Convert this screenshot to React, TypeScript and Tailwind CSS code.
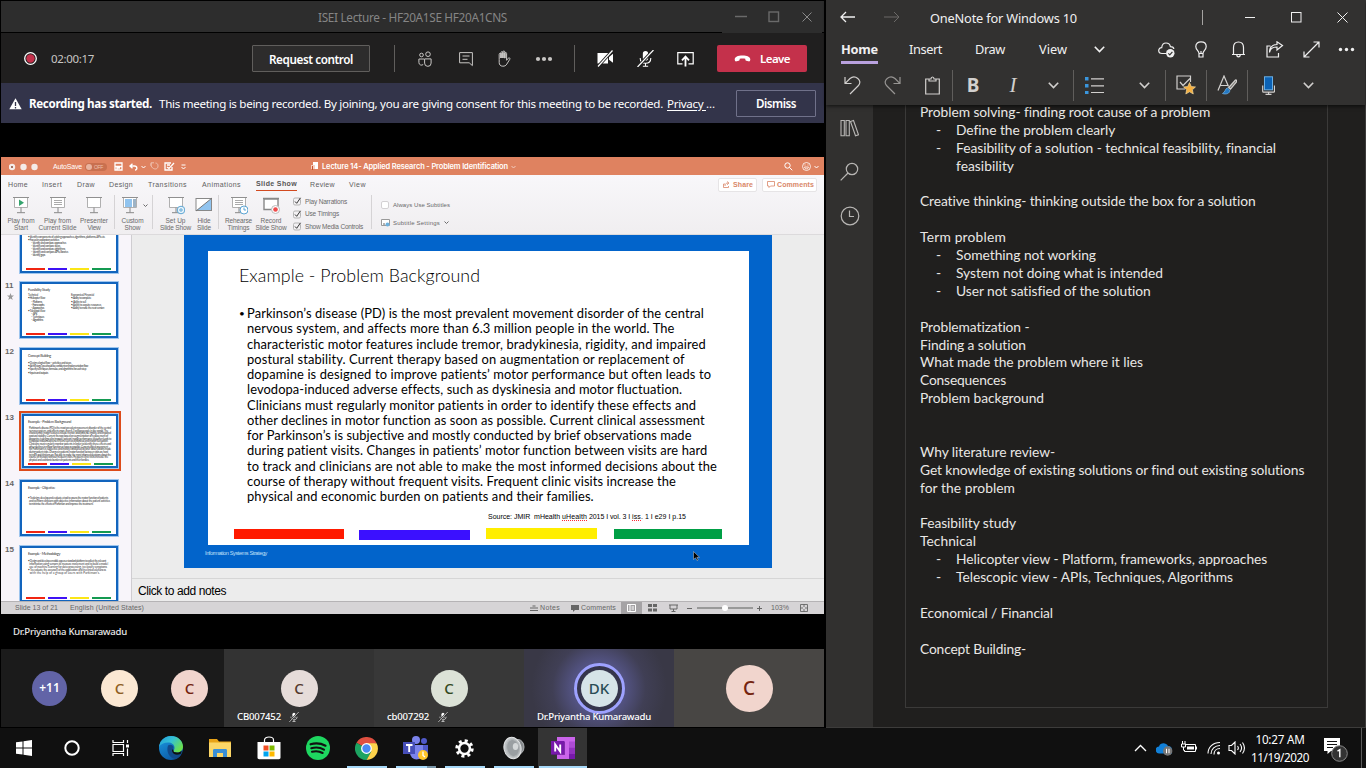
import React, { useLayoutEffect, useRef } from "react";

/* Text whose letter spacing is adjusted so that it fills the width of its box. */
function T({ className = "", ink: inkClass = "", children }: { className?: string; ink?: string; children: string }) {
  const box = useRef<HTMLSpanElement>(null);
  const ink = useRef<HTMLSpanElement>(null);
  useLayoutEffect(() => {
    const b = box.current!;
    const i = ink.current!;
    i.style.letterSpacing = "0px";
    const gap = b.getBoundingClientRect().width - i.getBoundingClientRect().width;
    i.style.letterSpacing = `${gap / children.length}px`;
  }, [children]);
  return (
    <span ref={box} className={`block shrink-0 whitespace-pre ${className}`}>
      <span ref={ink} className={`inline-block ${inkClass}`}>{children}</span>
    </span>
  );
}

type IconProps = { w?: number; h?: number; vb?: string; className?: string; sw?: number; children: React.ReactNode };
function I({ w = 16, h = 16, vb, className = "", sw = 1, children }: IconProps) {
  return (
    <svg width={w} height={h} viewBox={vb ?? `0 0 ${w} ${h}`} className={`block shrink-0 ${className}`} fill="none" stroke="currentColor" strokeWidth={sw}>
      {children}
    </svg>
  );
}

const segoe = "font-['Noto_Sans',sans-serif]";
const calibri = "font-['Lato',sans-serif]";

/* ---------- Meeting window ---------- */

function MeetingTitle() {
  return (
    <div className="flex h-[31px] items-center bg-[#2d2d2d] pt-px pl-[317px] text-[#858585]">
      <T className="w-[189px] text-[11.800px] leading-[16px]">ISEI Lecture - HF20A1SE HF20A1CNS</T>
      <div className="ml-[228px] flex items-center text-[#6a6a6a]">
        <I w={12} h={12}><path d="M0 5.500h12" strokeWidth="1.500" /></I>
        <I w={12} h={12} className="ml-[21px]"><rect x="1" y="1" width="9.500" height="9.500" strokeWidth="1.400" /></I>
        <I w={10} h={10} className="ml-[22px] text-[#8a8a8a]"><path d="M.5.500l9 9M9.500.500l-9 9" /></I>
      </div>
    </div>
  );
}

function MicOff({ s = 16 }: { s?: number }) {
  return (
    <I w={s} h={s} vb="0 0 16 16">
      <rect x="5.500" y="1" width="5" height="9" rx="2.500" fill="currentColor" stroke="none" />
      <path d="M3 7.500c0 3 2 5 5 5s5-2 5-5M8 12.500V15M5.500 15.300h5" />
      <path d="M15.500 0L.5 16" strokeWidth="3" className="stroke-[#222]" />
      <path d="M15.500 0L.5 16" strokeWidth="1.100" />
    </I>
  );
}

function MeetingBar() {
  return (
    <div className="flex h-[50px] items-center bg-[#201f1f] pt-px pl-[23px] text-[#c8c6c4]">
      <I w={13} h={13} className="text-white">
        <circle cx="6.500" cy="6.500" r="5.800" strokeWidth="1.300" />
        <circle cx="6.500" cy="6.500" r="4.200" className="fill-[#c4314b]" stroke="none" />
      </I>
      <T className="ml-[14px] w-[43px] text-[11.500px] leading-[16px]">02:00:17</T>
      <div className="ml-[158px] flex h-[27px] w-[118px] items-center justify-center rounded-[1px] border border-[#605e5c] bg-[#2d2c2c] text-white">
        <T className="w-[84px] text-[11.700px] leading-[16px] font-semibold">Request control</T>
      </div>
      <div className="ml-[24px] h-[27px] w-px bg-[#605e5c]" />
      <I w={14} h={16} className="ml-[23px]">
        <circle cx="3.500" cy="4" r="1.800" /><circle cx="10" cy="3.200" r="2.300" />
        <path d="M6 8H.9v3.500a2.600 2.600 0 0 0 4.300 2M6.600 7.900h6.500v4.200a3.200 3.200 0 0 1-6.500 0z" />
      </I>
      <I w={14} h={16} className="ml-[27px]">
        <path d="M.6 1.600h12.800v13l-3.200-2.800H.6zM3.500 5h7M3.500 8.300h5" />
      </I>
      <I w={15} h={17} vb="0 0 15 17" className="ml-[23px]">
        <path d="M3.200 9.500V4.200c0-1.300 1.800-1.300 1.800 0V8 2.600c0-1.400 1.900-1.400 1.900 0V8 2c0-1.400 1.900-1.400 1.900 0v6.200V3.500c0-1.400 1.800-1.400 1.800 0v6.800l1.600-2c.9-1 2.300-.1 1.600 1l-3 4.800c-.9 1.600-2.200 2.100-4 2.100-2.500 0-3.600-1.700-3.600-3.500z" />
        <path d="M5 3v5M6.900 2.500V8M8.800 3v5" strokeWidth="1.500" />
      </I>
      <I w={18} h={6} className="ml-[24px]">
        <g fill="currentColor" stroke="none"><circle cx="3" cy="3" r="2.100" /><circle cx="9" cy="3" r="2.100" /><circle cx="15" cy="3" r="2.100" /></g>
      </I>
      <div className="ml-[21px] h-[27px] w-px bg-[#605e5c]" />
      <div className="flex items-center text-white">
        <I w={17} h={17} className="ml-[22px]">
          <path d="M.5 3h10.500v10.500H.5zM12 7l4-3.200v9L12 9.700z" fill="currentColor" stroke="none" />
          <path d="M15.500.5L1 16.500" strokeWidth="3" className="stroke-[#201f1f]" />
          <path d="M15.500.5L1 16.500" strokeWidth="1.200" />
        </I>
        <div className="ml-[23px]"><MicOff s={17} /></div>
        <I w={17} h={16} className="ml-[23px]">
          <path d="M5.500 12.800H.8V1.700h15.400v11.100h-4.700" strokeWidth="1.200" />
          <path d="M8.500 15.500V6M5 9.300L8.500 5.500 12 9.300" strokeWidth="1.800" />
        </I>
      </div>
      <div className="ml-[23px] flex h-[27px] w-[90px] items-center rounded-[2px] bg-[#c4314b] pl-[17px] text-white">
        <I w={17} h={7}><path d="M.7 4.600C.5 2 4 .5 8.500.5s8 1.500 7.800 4.100c-.1 1.600-.8 2-2 1.700l-2-.5c-.8-.2-1-.8-1-2-1.500-.5-4-.5-5.600 0 0 1.200-.2 1.800-1 2l-2 .5C1.500 6.600.8 6.200.7 4.600z" fill="currentColor" stroke="none" /></I>
        <T className="ml-[9px] w-[30px] text-[11.500px] leading-[16px] font-semibold">Leave</T>
      </div>
    </div>
  );
}

function ConsentBanner() {
  return (
    <div className="flex h-[40px] items-center bg-[#33344a] pt-px pl-[8px] text-[11.600px] leading-[16px] text-white">
      <I w={13} h={12}><path d="M6.500.3l6.200 11H.3z" fill="currentColor" stroke="none" /><path d="M6.500 4v4M6.500 9v1.500" className="stroke-[#33344a]" strokeWidth="1.300" /></I>
      <T className="ml-[7px] w-[123px] font-bold">Recording has started.</T>
      <T className="ml-[7px] w-[504px]">This meeting is being recorded. By joining, you are giving consent for this meeting to be recorded.</T>
      <T className="ml-[4px] w-[39px]" ink="underline underline-offset-2">Privacy </T>
      <T className="w-[9px]">...</T>
      <div className="ml-[21px] flex h-[27px] w-[80px] items-center justify-center rounded-[1px] border border-[#70718a]">
        <T className="w-[40px] font-semibold">Dismiss</T>
      </div>
    </div>
  );
}

/* ---------- Shared presentation ---------- */

function PptTitle() {
  return (
    <div className="flex h-[18px] items-center bg-[#df8260] pt-px pl-[8px] text-[7px] leading-[10px] text-white">
      <I w={29} h={8}>
        <g fill="#f4ece9" stroke="none"><circle cx="3" cy="4" r="3.200" /><circle cx="14.500" cy="4" r="3.200" /><circle cx="25.500" cy="4" r="3.200" /></g>
        <circle cx="3" cy="4" r="1" fill="#8d4b35" stroke="none" />
      </I>
      <T className="ml-[15px] w-[29px] font-medium">AutoSave</T>
      <div className="ml-[3px] flex h-[8px] w-[22px] items-center rounded-full bg-[#c9704f]">
        <div className="ml-[1px] h-[6px] w-[6px] rounded-full bg-[#e9b5a0]" />
        <T className="ml-[2px] w-[9px] text-[5px] leading-[8px] text-[#edc1b0]">OFF</T>
      </div>
      <I w={9} h={9} className="ml-[7px]" sw={1.300}><path d="M1 1h7v7H1zM1 4.500h7M3 8V6h3" /></I>
      <I w={9} h={8} className="ml-[6px]" sw={1.400}><path d="M3.500 .8L1 3l2.500 2.300M1 3h4.500c3 0 3 4 .5 4" /></I>
      <I w={5} h={4} className="ml-[3px]"><path d="M.5 1l2 2 2-2" /></I>
      <I w={9} h={9} className="ml-[4px] opacity-50"><path d="M4 .8H1v3M1.300 1.300c-2 5 6.700 8.500 6.700 2.500C8 2 7 1.200 5.500 1" /></I>
      <I w={11} h={9} className="ml-[5px]"><path d="M7 1H1v7h7V5M3 5l2 1.500L10 1M3 3h3" strokeWidth="1.300" /></I>
      <I w={5} h={6} className="ml-[6px]"><path d="M.5 1h4M.5 3l2 2 2-2" /></I>
      <I w={8} h={9} className="ml-[125px]"><path d="M2 0h5v7H2z" fill="#fff" stroke="none" /><path d="M0 3h4v4H0z" fill="#f6cfc0" stroke="none" /><path d="M1.500 8V4" stroke="#c9552d" /></I>
      <T className="ml-[3px] w-[186px] font-['Inter',sans-serif] text-[7.500px] font-semibold">Lecture 14- Applied Research - Problem Identification</T>
      <I w={5} h={4} className="ml-[3px] opacity-60"><path d="M.5 1l2 2 2-2" /></I>
      <I w={9} h={9} className="ml-[268px]"><circle cx="3.500" cy="3.500" r="2.700" /><path d="M5.500 5.500L8.300 8.300" /></I>
      <I w={9} h={9} className="ml-[9px]" sw={0.800}><circle cx="4.500" cy="4.500" r="4" /><path d="M2.500 5c.5 2.500 3.500 2.500 4 0zM3 2.500v1M6 2.500v1" /></I>
      <I w={5} h={4} className="ml-[3px]"><path d="M.5 1l2 2 2-2" /></I>
    </div>
  );
}

function PptTabs() {
  return (
    <div className="flex h-[19px] items-center pt-px pl-[7px] text-[7px] leading-[10px] text-[#606060]">
      <T className="w-[20px]">Home</T>
      <T className="ml-[14px] w-[20px]">Insert</T>
      <T className="ml-[15px] w-[18px]">Draw</T>
      <T className="ml-[14px] w-[24px]">Design</T>
      <T className="ml-[15px] w-[39px]">Transitions</T>
      <T className="ml-[15px] w-[39px]">Animations</T>
      <div className="ml-[15px] flex h-[13px] w-[41px] flex-col border-b border-[#d24a20] pt-px">
        <T className="w-[41px] font-bold text-[#555]">Slide Show</T>
      </div>
      <T className="ml-[13px] w-[25px]">Review</T>
      <T className="ml-[14px] w-[17px]">View</T>
      <div className="ml-[352px] flex h-[14px] w-[39px] items-center rounded-[2px] border border-[#e6e4e6] bg-white pl-[4px] text-[#d98768]">
        <I w={7} h={7} sw={0.800}><path d="M2 3H.5v3.500h5V5M2 5c0-2 1-3 3-3M4 .5L6 2 4 3.800" /></I>
        <T className="ml-[3px] w-[20px] font-semibold">Share</T>
      </div>
      <div className="ml-[5px] flex h-[14px] w-[55px] items-center rounded-[2px] border border-[#e6e4e6] bg-white pl-[4px] text-[#d98768]">
        <I w={8} h={7} sw={0.800}><path d="M.5.500h7v4.500h-4L2 6.500V5H.5z" /></I>
        <T className="ml-[2px] w-[37px] font-semibold">Comments</T>
      </div>
    </div>
  );
}

function Easel({ children }: { children?: React.ReactNode }) {
  return (
    <I w={18} h={20}>
      <path d="M1 2.500h16" stroke="#909090" />
      <path d="M2.500 3v9.500h13V3" fill="#fff" stroke="#b0b0b0" />
      <path d="M9 12.500V17.500M5 17.700h8" stroke="#888" />
      {children}
    </I>
  );
}

function RibbonButton({ cell, icon, a, wa, b, wb }: { cell: string; icon: React.ReactNode; a: string; wa: string; b: string; wb: string }) {
  return (
    <div className={`flex shrink-0 flex-col items-center ${cell}`}>
      <div className="h-[22px] shrink-0">{icon}</div>
      <T className={`leading-[7px] ${wa}`}>{a}</T>
      <T className={`leading-[7px] ${wb}`}>{b}</T>
    </div>
  );
}

function RibbonCheck({ label, w }: { label: string; w: string }) {
  return (
    <div className="flex h-[12.500px] items-center">
      <I w={9} h={9}><rect x=".5" y="1" width="7" height="7" rx="1.500" fill="#f3f1f3" stroke="#b5b5b5" /><path d="M2 4.500L3.700 6.300 7.500.8" stroke="#333" /></I>
      <T className={`ml-[3px] leading-[8px] ${w}`}>{label}</T>
    </div>
  );
}

function Ribbon() {
  const sep = <div className="h-[34px] w-px shrink-0 bg-[#d5d3d5]" />;
  return (
    <div className="flex h-[41px] items-start pt-[1px] text-[6.500px] text-[#6a6a6a]">
      <RibbonButton cell="w-[40px]" a="Play from" wa="w-[27px]" b="Start" wb="w-[14px]" icon={<Easel><path d="M7 4.500l5 3.300-5 3.300z" fill="#35a46e" stroke="none" /></Easel>} />
      <RibbonButton cell="w-[33px]" a="Play from" wa="w-[27px]" b="Current Slide" wb="w-[38px]" icon={<Easel><path d="M5 5.500h8M5 7.500h8M5 9.500h8" stroke="#aaa" /></Easel>} />
      <RibbonButton cell="w-[40px]" a="Presenter" wa="w-[28px]" b="View" wb="w-[13px]" icon={<Easel />} />
      {sep}
      <div className="flex w-[37px] shrink-0">
        <RibbonButton cell="w-[35px]" a="Custom" wa="w-[22px]" b="Show" wb="w-[16px]" icon={<div className="-ml-[6px]"><Easel><path d="M4 4h7v8H4z" fill="#90c3ee" stroke="none" /><path d="M12 4h3v8h-3z" fill="#9db3c6" stroke="none" /></Easel></div>} />
        <I w={5} h={4} className="mt-[9px] -ml-[7px]"><path d="M.5.500l2 2 2-2" /></I>
      </div>
      {sep}
      <RibbonButton cell="ml-[2px] w-[41px]" a="Set Up" wa="w-[20px]" b="Slide Show" wb="w-[31px]" icon={<Easel><circle cx="14" cy="15" r="3.800" fill="#e9f4fb" stroke="#5ca5d3" /><circle cx="14" cy="15" r="1.200" stroke="#5ca5d3" /></Easel>} />
      <RibbonButton cell="w-[16px]" a="Hide" wa="w-[13px]" b="Slide" wb="w-[14px]" icon={<I w={18} h={20}><rect x="1" y="3.500" width="15.500" height="12" fill="#fff" stroke="#888" /><path d="M16 4v11H2z" fill="#91c4ef" stroke="none" /><path d="M1 16L17 3" stroke="#777" /></I>} />
      <div className="ml-[6px]">{sep}</div>
      <RibbonButton cell="w-[39px]" a="Rehearse" wa="w-[27px]" b="Timings" wb="w-[22px]" icon={<Easel><path d="M5 5.500h8M5 7.500h8M5 9.500h8" stroke="#aaa" /><circle cx="14" cy="15" r="4" fill="#fff" stroke="#5ca5d3" /><path d="M14 12.500V15h2" stroke="#5ca5d3" /></Easel>} />
      <RibbonButton cell="w-[26px]" a="Record" wa="w-[21px]" b="Slide Show" wb="w-[31px]" icon={<I w={18} h={20}><path d="M1 3.500h16M2 4v10.500h14V4z" fill="#fff" stroke="#888" strokeWidth="1.400" /><circle cx="13.500" cy="14.500" r="4" fill="#fff" stroke="#bbb" /><circle cx="13.500" cy="14.500" r="2.300" fill="#ef4c4c" stroke="none" /></I>} />
      <div className="mt-[1px] ml-[9px] flex w-[78px] shrink-0 flex-col">
        <RibbonCheck label="Play Narrations" w="w-[42px]" />
        <RibbonCheck label="Use Timings" w="w-[34px]" />
        <RibbonCheck label="Show Media Controls" w="w-[58px]" />
      </div>
      {sep}
      <div className="ml-[9px] flex flex-col pt-[4px] text-[6px]">
        <div className="flex h-[12px] items-center">
          <I w={8} h={8}><rect x=".5" y=".5" width="7" height="7" rx="1.500" fill="#fff" stroke="#d3d1d3" /></I>
          <T className="ml-[4px] w-[57px] leading-[8px]">Always Use Subtitles</T>
        </div>
        <div className="mt-[6px] flex h-[12px] items-center">
          <I w={9} h={8}><path d="M.5.500h8v6h-8z" fill="#fff" stroke="#999" /><path d="M2 5h2" stroke="#666" /><circle cx="6.500" cy="5.500" r="2" fill="#6db1dd" stroke="none" /></I>
          <T className="ml-[3px] w-[47px] leading-[8px]">Subtitle Settings</T>
          <I w={5} h={4} className="ml-[4px]"><path d="M.5.500l2 2 2-2" /></I>
        </div>
      </div>
    </div>
  );
}

const slideBody: [string, string][] = [
  ["Parkinson’s disease (PD) is the most prevalent movement disorder of the central", "w-[457px]"],
  ["nervous system, and affects more than 6.3 million people in the world. The", "w-[427px]"],
  ["characteristic motor features include tremor, bradykinesia, rigidity, and impaired", "w-[459px]"],
  ["postural stability. Current therapy based on augmentation or replacement of", "w-[438px]"],
  ["dopamine is designed to improve patients’ motor performance but often leads to", "w-[464px]"],
  ["levodopa-induced adverse effects, such as dyskinesia and motor fluctuation.", "w-[435px]"],
  ["Clinicians must regularly monitor patients in order to identify these effects and", "w-[449px]"],
  ["other declines in motor function as soon as possible. Current clinical assessment", "w-[458px]"],
  ["for Parkinson’s is subjective and mostly conducted by brief observations made", "w-[445px]"],
  ["during patient visits. Changes in patients’ motor function between visits are hard", "w-[461px]"],
  ["to track and clinicians are not able to make the most informed decisions about the", "w-[470px]"],
  ["course of therapy without frequent visits. Frequent clinic visits increase the", "w-[429px]"],
  ["physical and economic burden on patients and their families.", "w-[347px]"],
];

function MiniBars() {
  return (
    <div className="mt-auto mb-[1px] flex h-[2px] shrink-0 gap-[3px] pl-[4px]">
      <div className="w-[19px] bg-[#f02511]" /><div className="w-[19px] bg-[#3e12f5]" /><div className="w-[19px] bg-[#fbe616]" /><div className="w-[19px] bg-[#149a51]" />
    </div>
  );
}

function Thumb({ n, star, active, title, tw, children }: { n: string; star?: boolean; active?: boolean; title: string; tw: string; children: React.ReactNode }) {
  return (
    <div className="flex h-[65.900px] shrink-0">
      <div className="w-[18px] pl-[4px] text-[#666]">
        <div className="text-[8px] leading-[7px] font-bold">{n}</div>
        {star && <I w={7} h={7} vb="0 0 10 10" className="mt-[4px] ml-[2px]"><path d="M5 0l1.300 3.600L10 3.700 7 6l1.200 4L5 7.700 1.800 10 3 6 0 3.700l3.700-.1z" fill="#999" stroke="none" /></I>}
      </div>
      <div className={active ? "-mt-[3px] h-[60px] w-[102px] border-2 border-[#dd4a1a] bg-white p-[1px]" : "h-[58px] w-[101px] pl-[1px]"}>
        <div className={`flex flex-col overflow-hidden border-[2px] border-[#1264bd] bg-white text-[2.900px] text-[#333] outline outline-[#9ec5ee] ${calibri} ${active ? "h-[54px] w-[96px]" : "h-[56px] w-[98px]"}`}>
          <div className={`flex flex-col pt-[4px] ${active ? "pl-[4px]" : "pl-[6px]"}`}>
            <T className={`text-[3.700px] leading-[4px] ${tw}`}>{title}</T>
            {children}
          </div>
          <MiniBars />
        </div>
      </div>
    </div>
  );
}

function MiniLines({ lines }: { lines: [string, string, string?][] }) {
  return (
    <div className="flex flex-col">
      {lines.map(([l, w, indent]) => <T key={l} className={`h-[3.100px] leading-[3.100px] ${w} ${indent ?? ""}`}>{l}</T>)}
    </div>
  );
}

function ThumbPane() {
  return (
    <div className="h-full w-[130px] overflow-hidden bg-[#f8f5fa]">
      <div className="-mt-[18.500px] flex flex-col">
        <Thumb n="10" title="Problem Solving" tw="w-[30px]">
          <div className="mt-[9px]"><MiniLines lines={[["• Identify components of existing approaches, algorithms, platforms, APIs etc.", "w-[77px]"], ["• Focus on exploratory activities", "w-[31px]"], ["– Identify and compare approaches", "w-[35px]", "ml-[3px]"], ["– Identify and compare steps", "w-[29px]", "ml-[3px]"], ["– Identify and compare algorithms", "w-[34px]", "ml-[3px]"], ["– Identify and compare APIs, libraries", "w-[37px]", "ml-[3px]"], ["– Identify gaps", "w-[14px]", "ml-[3px]"]]} /></div>
        </Thumb>
        <Thumb n="11" star title="Feasibility Study" tw="w-[22px]">
          <div className="mt-[2px] flex gap-[26px]">
            <MiniLines lines={[["Technical", "w-[10px]"], ["• Helicopter View", "w-[17px]"], ["– Platforms", "w-[11px]", "ml-[3px]"], ["– Frameworks", "w-[13px]", "ml-[3px]"], ["– Approaches", "w-[13px]", "ml-[3px]"], ["• Telescopic View", "w-[17px]"], ["– APIs", "w-[6px]", "ml-[3px]"], ["– Techniques", "w-[13px]", "ml-[3px]"], ["– Algorithms", "w-[12px]", "ml-[3px]"]]} />
            <MiniLines lines={[["Economical/Financial", "w-[23px]"], ["• Ability to complete", "w-[20px]"], ["• Ability to sell", "w-[15px]"], ["• Ability to acquire resources", "w-[30px]"], ["• Ability to make the next version", "w-[33px]"]]} />
          </div>
        </Thumb>
        <Thumb n="12" title="Concept Building" tw="w-[23px]">
          <div className="mt-[4px]"><MiniLines lines={[["• Design a logical flow – activities and steps", "w-[43px]"], ["• At this stage, you should be confident on implementation flow", "w-[60px]"], ["• Specify techniques, formulae, and algorithms for each step", "w-[58px]"], ["• Inputs and outputs", "w-[20px]"]]} /></div>
        </Thumb>
        <Thumb n="13" active title="Example - Problem Background" tw="w-[43px]">
          <div className="mt-[3px] flex flex-col pl-[1px]">
            {slideBody.map(([l], k) => <T key={l} className={`h-[2.650px] leading-[2.650px] ${k === 12 ? "w-[60px]" : k % 2 ? "w-[79px]" : "w-[82px]"}`}>{l}</T>)}
          </div>
        </Thumb>
        <Thumb n="14" title="Example - Objective" tw="w-[27px]">
          <div className="mt-[7px]"><MiniLines lines={[["• To design, develop and evaluate a tool to assess the motor function of patients", "w-[80px]"], ["  and to inform clinicians with objective information about the patient activities", "w-[82px]"], ["  to minimise the effects of Parkinson and improve the treatment.", "w-[65px]"]]} /></div>
        </Thumb>
        <Thumb n="15" title="Example - Methodology" tw="w-[32px]">
          <div className="mt-[4px]"><MiniLines lines={[["• Design and develop a mobile app as a standard platform to collect the relevant", "w-[78px]"], ["  information using sensors to measure movement and to build a model", "w-[80px]"], ["  use of machine learning for data processing, to classify symptoms", "w-[79px]"], ["• To evaluate the accuracy of the application and its clinical usefulness", "w-[78px]"], ["  with the help of a group of users with Parkinson’s.", "w-[72px]"]]} /></div>
        </Thumb>
      </div>
    </div>
  );
}

function Slide() {
  return (
    <div className="relative ml-[52px] flex h-[333px] w-[588px] flex-col bg-[#0264cb] pt-[16px] pl-[24px]">
      <div className="flex h-[294px] w-[541px] flex-col bg-white text-black">
        <T className={`mt-[13px] ml-[31px] w-[241px] text-[17.800px] leading-[22px] font-light ${calibri}`}>Example - Problem Background</T>
        <div className={`mt-[20px] flex pl-[31px] text-[12.900px] leading-[15.250px] ${calibri}`}>
          <div className="w-[8px] text-[10px]">•</div>
          <div className="flex flex-col">
            {slideBody.map(([l, w]) => <T key={l} className={`h-[15.250px] ${w}`}>{l}</T>)}
          </div>
        </div>
        <div className="mt-[8px] ml-[280px] flex text-[7px] leading-[10px]">
          <T className="w-[74px]">Source: JMIR  mHealth </T>
          <T className="w-[25px]" ink="underline decoration-red-500 decoration-dotted">uHealth</T>
          <T className="w-[45px]"> 2015 I vol. 3 I </T>
          <T className="w-[9px]" ink="underline decoration-red-500 decoration-dotted">iss</T>
          <T className="w-[45px]">. 1 I e29 I p.15</T>
        </div>
        <div className="mt-[6px] flex h-[13px] pl-[26px]">
          <div className="mt-[1px] h-[10px] w-[110px] bg-[#ff1a00]" />
          <div className="mt-[2px] ml-[15px] h-[10px] w-[111px] bg-[#3b10ff]" />
          <div className="ml-[16px] h-[11px] w-[111px] bg-[#ffee00]" />
          <div className="mt-[1px] ml-[17px] h-[10px] w-[108px] bg-[#009f45]" />
        </div>
      </div>
      <T className="mt-[3px] -ml-[3px] w-[62px] text-[5.600px] leading-[10px] text-[#c5e0f8]">Information Systems Strategy</T>
      <I w={7} h={10} className="absolute top-[316px] left-[509px]"><path d="M.500.500v8l2-1.700 1.500 2.800 1.200-.6-1.400-2.700H6.500z" fill="#000" stroke="#ccc" strokeWidth=".5" /></I>
    </div>
  );
}

function PptStatus() {
  return (
    <div className="flex h-[13px] items-center border-t border-[#b5b3b5] bg-[#d6d4d6] pl-[14px] text-[7px] leading-[10px] text-[#666]">
      <T className="w-[43px]">Slide 13 of 21</T>
      <T className="ml-[12px] w-[74px]">English (United States)</T>
      <I w={8} h={8} className="ml-[386px]"><path d="M0 4h8M0 6.500h8M2.500 2h3" strokeWidth="1.100" /></I>
      <T className="ml-[2px] w-[20px]">Notes</T>
      <I w={8} h={8} className="ml-[11px]"><path d="M0 1h8v5H4L2 8V6H0z" fill="currentColor" stroke="none" /></I>
      <T className="ml-[2px] w-[35px]">Comments</T>
      <div className="ml-[5px] flex h-[12px] w-[21px] items-center justify-center bg-[#a5a3a5] text-white"><I w={9} h={8}><path d="M.5.500h8v7h-8zM3 .5v7M4.500 3h2.500M4.500 5h2.500" /></I></div>
      <I w={9} h={8} className="ml-[6px]"><path d="M0 0h4v3H0zM5 0h4v3H5zM0 4.500h4v3H0zM5 4.500h4v3H5z" fill="currentColor" stroke="none" /></I>
      <I w={9} h={8} className="ml-[12px]"><path d="M0 1h9M1 1v4h7V1M4.500 5v2M2.500 7.500h4" /></I>
      <I w={5} h={5} className="ml-[9px]"><path d="M0 2.500h5" /></I>
      <div className="ml-[5px] flex h-[6px] w-[56px] items-center bg-[linear-gradient(#999,#999)] bg-[length:100%_2px] bg-center bg-no-repeat pl-[25px]"><div className="h-[6px] w-[6px] rounded-full bg-white" /></div>
      <I w={5} h={5} className="ml-[4px]"><path d="M0 2.500h5M2.500 0v5" /></I>
      <T className="ml-[9px] w-[18px]">103%</T>
      <I w={8} h={8} className="ml-[11px]" sw={0.900}><path d="M.5.500h7v7h-7zM4 0v3M4 5v3M0 4h3M5 4h3" /></I>
    </div>
  );
}

function Presentation() {
  return (
    <div className="mt-[34px] flex h-[457px] flex-col bg-[#ececec] font-['Liberation_Sans',sans-serif]">
      <PptTitle />
      <div className="flex h-[60px] flex-col border-b border-[#dcdadc] bg-linear-to-b from-[#f8f7fa] to-[#f0eef0]">
        <PptTabs />
        <Ribbon />
      </div>
      <div className="flex h-[366px]">
        <ThumbPane />
        <div className="flex w-[693px] flex-col border-l border-[#cfcdd1]">
          <Slide />
          <div className="mt-[10px] flex h-[23px] items-center border-t border-[#d6d6d6] pt-[2px] pl-[6px] text-black">
            <T className="w-[88px] text-[12px] leading-[16px]">Click to add notes</T>
          </div>
        </div>
      </div>
      <PptStatus />
    </div>
  );
}

function Avatar({ children, className }: { children: string; className: string }) {
  return <div className={`flex shrink-0 items-center justify-center rounded-full ${className}`}>{children}</div>;
}

function Participants() {
  return (
    <div className="flex h-[78px] text-[15px] font-medium">
      <div className="flex w-[223px] items-center bg-[#1b1b1b] pl-[31px]">
        <Avatar className="h-[35px] w-[35px] bg-[#6264a7] text-[12px] font-semibold text-white">+11</Avatar>
        <Avatar className="ml-[34px] h-[37px] w-[37px] bg-[#fbe8d3] text-[#8f5f24]">C</Avatar>
        <Avatar className="ml-[33px] h-[37px] w-[37px] bg-[#f1d5cd] text-[#74240f]">C</Avatar>
      </div>
      <div className="relative flex w-[150px] items-center justify-center bg-[#333]">
        <Avatar className="h-[37px] w-[37px] bg-[#e6dcd9] text-[#54392e]">C</Avatar>
        <div className="absolute bottom-[2px] left-[13px] flex items-center text-[9.600px] leading-[16px] text-white">
          <T className="w-[44px]">CB007452</T><div className="ml-[8px]"><MicOff s={10} /></div>
        </div>
      </div>
      <div className="relative flex w-[150px] items-center justify-center bg-[#383838]">
        <Avatar className="h-[37px] w-[37px] bg-[#dce2d7] text-[#33491f]">C</Avatar>
        <div className="absolute bottom-[2px] left-[13px] flex items-center text-[9.600px] leading-[16px] text-white">
          <T className="w-[42px]">cb007292</T><div className="ml-[9px]"><MicOff s={10} /></div>
        </div>
      </div>
      <div className="relative flex w-[150px] items-center justify-center bg-[radial-gradient(circle,#5c5c92_0%,#525280_32%,#403f55_55%,#393846_80%)]">
        <div className="flex h-[51px] w-[51px] items-center justify-center rounded-full border-[3px] border-[#9ea2ff] bg-[#35354c]">
          <Avatar className="h-[37px] w-[37px] bg-[#d6e4e8] text-[#294c55]">DK</Avatar>
        </div>
        <div className="absolute bottom-[2px] left-[13px] text-[9.600px] leading-[16px] text-white"><T className="w-[114px]">Dr.Priyantha Kumarawadu</T></div>
      </div>
      <div className="flex w-[150px] items-center justify-center bg-[#484644]">
        <Avatar className="h-[47px] w-[47px] bg-[#f1d5cd] text-[19px] text-[#74240f]">C</Avatar>
      </div>
    </div>
  );
}

function Meeting() {
  return (
    <div className={`flex h-[728px] w-[825px] shrink-0 flex-col bg-black pt-px pr-px pl-px ${segoe}`}>
      <MeetingTitle />
      <div className="flex h-px shrink-0 bg-black"><div className="ml-[721px] w-[100px] bg-[#2d2d2d]" /></div>
      <MeetingBar />
      <ConsentBanner />
      <Presentation />
      <div className="flex h-[35px] items-center pt-px pl-[12px] text-[9.600px] leading-[16px] font-medium text-[#e8e8e8]"><T className="w-[114px]">Dr.Priyantha Kumarawadu</T></div>
      <Participants />
    </div>
  );
}

/* ---------- Notes window ---------- */

function Cell({ className = "w-[40px]", children }: { className?: string; children: React.ReactNode }) {
  return <div className={`flex shrink-0 items-center justify-center ${className}`}>{children}</div>;
}

function Chevron() {
  return <I w={11} h={7} sw={1.600}><path d="M.8.800l4.700 4.700L10.200.800" /></I>;
}

function NotesChrome() {
  const sep = <div className="h-[31px] w-px shrink-0 bg-[#605e5c]" />;
  return (
    <div className="z-10 flex h-[105px] shrink-0 flex-col bg-[#323130] text-[#f0f0f0] shadow-[0_1px_4px_rgba(0,0,0,0.7)]">
      <div className="flex h-[34px] items-center pl-[14px]">
        <I w={15} h={12} sw={1.300}><path d="M15 6H1M6 1L1 6l5 5" /></I>
        <I w={16} h={12} className="ml-[29px] text-[#6b6967]"><path d="M0 6h15M10 1l5 5-5 5" /></I>
        <T className="ml-[30px] w-[147px] pt-[2px] text-[12.800px] leading-[18px]">OneNote for Windows 10</T>
        <div className="ml-[125px] h-[15px] w-px bg-[#a5a3a1]" />
        <I w={11} h={10} className="ml-[42px]"><path d="M0 5.500h10" /></I>
        <I w={11} h={11} className="ml-[35px]"><rect x=".5" y=".5" width="9.500" height="9.500" /></I>
        <I w={11} h={11} className="ml-[35px]"><path d="M.5.500l10 10M10.500.500l-10 10" /></I>
      </div>
      <div className="flex h-[31px] items-start pt-[6px] pl-[15px] text-[12.800px] leading-[18px]">
        <div className="flex h-[24px] flex-col justify-between border-b-[3px] border-[#b9a1de]"><T className="w-[37px] font-bold">Home</T></div>
        <T className="ml-[31px] w-[33px]">Insert</T>
        <T className="ml-[33px] w-[30px]">Draw</T>
        <T className="ml-[34px] w-[28px]">View</T>
        <div className="flex h-[18px] items-center pl-[27px]">
          <Chevron />
          <I w={17} h={17} className="ml-[53px]" sw={1.200}><path d="M8 12.500H4C1.800 12.500.700 11 .700 9.500S2 6.500 3.700 6.700C4 3.500 6 2 8 2c2.500 0 4 1.500 4.400 3.700 2 0 3.400 1 3.400 2.300" /><circle cx="12.300" cy="12.300" r="4.200" fill="currentColor" stroke="none" /><path d="M10.300 12.300l1.500 1.500 2.600-3" stroke="#323130" /></I>
          <I w={13} h={17} className="ml-[20px]" sw={1.200}><path d="M4 12.500c0-3-3.200-3.500-3.200-7C.800 2.500 3.200.800 6 .800s5.200 1.700 5.200 4.700c0 3.500-3.200 4-3.200 7zM4 12.500v3.500h4v-3.500M6 10v2.500" /></I>
          <I w={15} h={17} className="ml-[23px]" sw={1.200}><path d="M1 13.500h13M2.500 13.500V6.500C2.500 3 4.500 1 7.500 1s5 2 5 5.500v7M5.800 13.800c0 2.700 3.400 2.700 3.400 0" /></I>
          <I w={18} h={17} className="ml-[20px]" sw={1.200}><path d="M4.500 5H1v11h11.500v-4M3.500 11.500C4 8 6 6 11 6V9l5.500-4.500L11 .800V3.500C6 3.800 3.500 7 3.500 11.500z" /></I>
          <I w={17} h={17} className="ml-[19px]" sw={1.200}><path d="M1.500 15.500l14-14M10.500 1h5.500v5.500M1 10.500V16h5.500" /></I>
          <I w={17} h={5} className="ml-[18px]"><g fill="currentColor" stroke="none"><circle cx="2.500" cy="2.500" r="1.700" /><circle cx="8.500" cy="2.500" r="1.700" /><circle cx="14.500" cy="2.500" r="1.700" /></g></I>
        </div>
      </div>
      <div className="flex h-[40px] items-center pl-[6px] text-[#d2d0ce]">
        <Cell><I w={17} h={19} sw={1.200}><path d="M1 1v6.500h6.500M1.200 7.300L6 2.500c5-4.500 13 2 8.500 7L6 18" /></I></Cell>
        <Cell><I w={17} h={19} sw={1.200} className="text-[#979593]"><path d="M16 1v6.500H9.500M15.800 7.300L11 2.500c-5-4.500-13 2-8.500 7L11 18" /></I></Cell>
        <Cell><I w={15} h={19} sw={1.200}><path d="M4 3H.700v15h13.600V3H11M4 5V3h2c0-2.700 3-2.700 3 0h2v2z" /></I></Cell>
        {sep}
        <Cell><span className="text-[19px] leading-[24px] font-bold">B</span></Cell>
        <Cell><span className="font-['Liberation_Serif',serif] text-[21px] leading-[24px] italic">I</span></Cell>
        <Cell><Chevron /></Cell>
        {sep}
        <Cell><I w={19} h={17}><path d="M0 0h3.500v3.500H0zM0 7h3.500v3.500H0zM0 14h3.500v3H0z" fill="#3a96dd" stroke="none" /><path d="M6 1.800h13M6 8.800h13M6 15.500h13" strokeWidth="1.200" /></I></Cell>
        <Cell className="ml-[10px] w-[41px]"><Chevron /></Cell>
        {sep}
        <Cell><I w={20} h={20} sw={1.200}><path d="M9 14H1V1h13.500v6M4 7l3 3.500 7-7" /><path d="M13.500 7.500l1.800 4 4.200.4-3.100 2.900.9 4.200-3.800-2.200-3.700 2.200.8-4.200-3.100-2.900 4.200-.4z" fill="#f5b041" stroke="#f7dfa8" strokeWidth=".6" /></I></Cell>
        {sep}
        <Cell><I w={20} h={20} sw={1.200}><path d="M1 15.500L7 1l4.500 10.500M3 10.500h8" /><path d="M18.500 5l-6.800 7.500 1.800 1.700L19.500 7c.5-1.500-.2-2.300-1-2z" fill="#77756f" /><path d="M10.500 13c-2.500.5-2 4-5 5.500 3.500 1.200 7.500 0 7.300-3.300z" fill="#2479c4" stroke="#76b9ed" strokeWidth=".7" /></I></Cell>
        {sep}
        <Cell><I w={13} h={19}><rect x="2.500" y=".8" width="8" height="13" fill="#0b62b5" stroke="#69afe5" /><path d="M.700 9.500v5.800c0 .6.300.9.900.9h10c.6 0 .9-.3.900-.9V9.500M6.600 16.500v2M3.500 18.300h6" strokeWidth="1.200" /></I></Cell>
        <Cell><Chevron /></Cell>
      </div>
    </div>
  );
}

function Note({ dash, w, children }: { dash?: boolean; w?: string; children?: string }) {
  return (
    <div className="flex h-[17.900px] shrink-0 leading-[17.900px]">
      {dash && <span className="w-[36px] pl-[16px]">-</span>}
      {children && <T className={w}>{children}</T>}
    </div>
  );
}

function NotesBody() {
  return (
    <div className="flex h-[622px] overflow-hidden bg-[#201f1e]">
      <div className="flex w-[47px] flex-col items-center bg-[#31302f] pt-[14px] text-[#b8b6b4]">
        <I w={19} h={18} sw={1.100}><path d="M1 1.500h3.300v15.300H1zM6 1.500h3.300v15.300H6zM10.500 2.500l3-1 5 14.300-3 1z" /></I>
        <I w={19} h={19} className="mt-[25px]" sw={1.200}><circle cx="12" cy="7" r="5.700" /><path d="M8 11l-7.300 7.300" /></I>
        <I w={20} h={20} className="mt-[25px]" sw={1.200}><circle cx="10" cy="10" r="8.800" /><path d="M9.500 4.500V10.500H14" /></I>
      </div>
      <div className={`ml-[32px] flex h-[603px] w-[423px] flex-col border-r border-b border-l border-[#3b3a39] pl-[14px] text-[13.800px] text-[#e9e7e5] ${calibri}`}>
        <div className="-mt-[2px] flex flex-col">
          <Note w="w-[290px]">Problem solving- finding root cause of a problem</Note>
          <Note dash w="w-[159px]">Define the problem clearly</Note>
          <Note dash w="w-[320px]">Feasibility of a solution - technical feasibility, financial</Note>
          <div className="pl-[36px]"><Note w="w-[58px]">feasibility</Note></div>
          <Note />
          <Note w="w-[336px]">Creative thinking- thinking outside the box for a solution</Note>
          <Note />
          <Note w="w-[86px]">Term problem</Note>
          <Note dash w="w-[140px]">Something not working</Note>
          <Note dash w="w-[207px]">System not doing what is intended</Note>
          <Note dash w="w-[195px]">User not satisfied of the solution</Note>
          <Note />
          <Note w="w-[110px]">Problematization -</Note>
          <Note w="w-[106px]">Finding a solution</Note>
          <Note w="w-[223px]">What made the problem where it lies</Note>
          <Note w="w-[86px]">Consequences</Note>
          <Note w="w-[124px]">Problem background</Note>
          <Note />
          <Note />
          <Note w="w-[135px]">Why literature review-</Note>
          <Note w="w-[385px]">Get knowledge of existing solutions or find out existing solutions</Note>
          <Note w="w-[95px]">for the problem</Note>
          <Note />
          <Note w="w-[96px]">Feasibility study</Note>
          <Note w="w-[56px]">Technical</Note>
          <Note dash w="w-[311px]">Helicopter view - Platform, frameworks, approaches</Note>
          <Note dash w="w-[277px]">Telescopic view - APIs, Techniques, Algorithms</Note>
          <Note />
          <Note w="w-[133px]">Economical / Financial</Note>
          <Note />
          <Note w="w-[106px]">Concept Building-</Note>
        </div>
      </div>
    </div>
  );
}

function Notes() {
  return (
    <div className={`ml-px flex w-[540px] flex-col border-r border-b border-[#3d3c3b] ${segoe}`}>
      <NotesChrome />
      <NotesBody />
    </div>
  );
}

/* ---------- Taskbar ---------- */

function TaskButton({ bar = "bg-transparent", active, children }: { bar?: string; active?: boolean; children: React.ReactNode }) {
  return (
    <div className={`flex h-[40px] w-[49px] shrink-0 flex-col items-center ${active ? "bg-[#343434]" : ""}`}>
      <div className="flex h-[38px] items-center pt-[2px]">{children}</div>
      <div className={`h-[2px] ${active ? "w-[48px]" : "w-[40px]"} ${bar}`} />
    </div>
  );
}

function Taskbar() {
  return (
    <div className={`flex h-[40px] items-center bg-[#101010] text-white ${segoe}`}>
      <Cell className="w-[48px]"><I w={16} h={16}><path d="M0 2.300l6.500-.9v6.100H0zM7.500 1.200L16 0v7.500H7.500zM0 8.500h6.500v6.100L0 13.700zM7.500 8.500H16V16l-8.500-1.200z" fill="#fff" stroke="none" /></I></Cell>
      <Cell className="w-[48px]"><I w={16} h={16}><circle cx="8" cy="8" r="6.700" strokeWidth="2" /></I></Cell>
      <Cell className="w-[48px]"><I w={17} h={16} sw={1.200}><path d="M1 0v2.500h10.500V0M1 4.500h10.500v7H1zM1 16v-2.500h10.500V16M15.500 0v3M15.500 8.500V16" /><path d="M14 4.500h3v3h-3z" fill="#fff" stroke="none" /></I></Cell>
      <div className="w-[2px]" />
      <TaskButton>
        <I w={24} h={24}>
          <defs>
            <linearGradient id="e1" x1="0" y1="0" x2="1" y2=".6"><stop offset="0" stopColor="#209bd8" /><stop offset=".5" stopColor="#35c1d6" /><stop offset="1" stopColor="#6be04b" /></linearGradient>
            <linearGradient id="e2" x1="0" y1="0" x2=".6" y2="1"><stop offset="0" stopColor="#1b9be4" /><stop offset="1" stopColor="#0c59a4" /></linearGradient>
          </defs>
          <circle cx="12" cy="12" r="12" fill="url(#e2)" stroke="none" />
          <path d="M0 11C1 4 6 0 12 0c7 0 12 5 12 10.500 0 4-3 6-6 6-2.500 0-4-1-3.500-2 1-1.200 1-2 1-3C15.500 8.500 12.500 6.500 9 6.500 5 6.500 1.500 8 0 11z" fill="url(#e1)" stroke="none" />
          <path d="M9 9.500c-2 6 1 13 8 13.500 3-1.300 4.500-3 5.500-5.500-4.500 2.500-9 1-9.500-2.500-.2-1.500 1.500-1.500 1.500-3.500C14.500 9 11 8 9 9.500z" fill="#114a8b" stroke="none" />
          <path d="M14.500 14.500c-.5 1 1 2 3.500 2 2 0 3.500-.6 4.700-2l-.5 3c-4 2.500-8.700 1-9.200-2.500-.1-1 .5-1.500 1-2z" fill="#101010" stroke="none" />
        </I>
      </TaskButton>
      <TaskButton><I w={22} h={18}><path d="M0 0h8l2 2.500H22V18H0z" fill="#e8a317" stroke="none" /><path d="M0 3.500h22V18H0z" fill="#fbd667" stroke="none" /><path d="M4 18v-6.500c0-1 .5-1.500 1.500-1.500h11c1 0 1.500.5 1.500 1.500V18h-4v-4H8v4z" fill="#3a8fd6" stroke="none" /></I></TaskButton>
      <TaskButton><I w={24} h={24}><path d="M7.500 6V4c0-4 9-4 9 0v2" strokeWidth="1.200" /><path d="M.5 6h23v15.500c0 1-.7 1.700-1.700 1.700H2.200c-1 0-1.700-.7-1.700-1.700z" fill="#fff" stroke="none" /><path d="M6.500 9.500h5v5h-5z" fill="#f04e23" stroke="none" /><path d="M12.500 9.500h5v5h-5z" fill="#7fba00" stroke="none" /><path d="M6.500 15.500h5v5h-5z" fill="#00a4ef" stroke="none" /><path d="M12.500 15.500h5v5h-5z" fill="#ffb900" stroke="none" /></I></TaskButton>
      <TaskButton><I w={24} h={24}><circle cx="12" cy="12" r="12" fill="#1ed760" stroke="none" /><path d="M4.500 8.300c5-1.500 10.500-1 15 1.400M5.300 12.200c4.200-1.200 9-.8 12.700 1.400M6 15.800c3.500-1 7.500-.6 10.600 1.200" stroke="#111" strokeWidth="2.100" strokeLinecap="round" /></I></TaskButton>
      <TaskButton bar="bg-[#a6d8f8]">
        <I w={23} h={23} vb="0 0 24 24">
          <g stroke="none"><path d="M12 12L1.600 6a12 12 0 0 1 20.800 0z" fill="#df4f40" /><path d="M12 12L1.600 6A12 12 0 0 0 12 24l5.200-9z" fill="#1da462" /><path d="M12 6.500h10.600A12 12 0 0 1 12 24l5-9z" fill="#fdd24b" /></g>
          <circle cx="12" cy="12" r="5" fill="#4a8af4" stroke="#fff" strokeWidth="1.300" />
        </I>
      </TaskButton>
      <TaskButton bar="bg-[linear-gradient(90deg,#a6d8f8_31px,#7895a8_31px)]">
        <I w={26} h={25}><g stroke="none"><circle cx="21" cy="5" r="3" fill="#5059c9" /><path d="M16 9h9v7a4.500 4.500 0 0 1-9 0z" fill="#5059c9" /><circle cx="13" cy="4" r="4" fill="#7b83eb" /><path d="M7 9h13v8a6.500 6.500 0 0 1-13 0z" fill="#7b83eb" /><path d="M0 6h12v12H0z" fill="#464eb8" /><circle cx="20" cy="19" r="5" fill="#ffc62b" /></g><path d="M3 9h6.500M6.200 9v7" strokeWidth="1.900" /><path d="M20 15.500v4l2 1.500" strokeWidth="1.300" /></I>
      </TaskButton>
      <TaskButton bar="bg-[#a6d8f8]"><I w={19} h={19}><circle cx="9.500" cy="9.500" r="7.700" strokeWidth="3" strokeDasharray="3.020 3.020" /><circle cx="9.500" cy="9.500" r="5.400" strokeWidth="2.500" /></I></TaskButton>
      <TaskButton bar="bg-[#a6d8f8]"><I w={22} h={24}><ellipse cx="15" cy="11" rx="6" ry="7.500" fill="#85898c" stroke="#b5b8ba" /><ellipse cx="9.500" cy="12" rx="8.500" ry="10.800" fill="#bfc3c5" stroke="#e5e7e8" transform="rotate(-12 9.500 12)" /><ellipse cx="10" cy="12" rx="6.200" ry="8.500" fill="#9a9fa2" stroke="#b0b4b6" transform="rotate(-12 10 12)" /><ellipse cx="12.500" cy="10.500" rx="2.700" ry="3.500" fill="#d5d8d9" stroke="none" /></I></TaskButton>
      <TaskButton active bar="bg-[#a6d8f8]"><I w={24} h={24}><g stroke="none"><path d="M6 1h18v22H6z" fill="#ca64ea" /><path d="M18 5.500h6v6h-6z" fill="#ae4bd5" /><path d="M18 11.500h6v6h-6z" fill="#9332bf" /><path d="M18 17.500h6V23h-6z" fill="#7719aa" /><path d="M1 6h13v13H1z" fill="#4a116e" opacity=".5" /><path d="M0 5h13.500v13.500H0z" fill="#7719aa" /></g><path d="M4.200 15.500v-7l5 7v-7" strokeWidth="1.900" /></I></TaskButton>
      <div className="flex h-full w-[779px] items-center pl-[547px]">
        <I w={13} h={8} sw={1.300}><path d="M1 7l5.500-5.500L12 7" /></I>
        <I w={17} h={15} className="ml-[9px]"><path d="M3.500 12.500a3.500 3.500 0 0 1-.5-7C4 1.500 10 1 12 5c3 0 4 2 4 4v3.500z" fill="#1180d8" stroke="none" /><circle cx="11.700" cy="10" r="4.700" fill="#777" stroke="none" /><path d="M10.500 7.800v4.400M13 7.800v4.400" /></I>
        <I w={17} h={14} className="ml-[8px]"><path d="M5 3.500h9.500v7H3.500V9M1.500 0v3M4 0v3M.5 3h4v3h-4zM2.500 6v3.500" /><path d="M6 5.500h7v3H6z" fill="#fff" stroke="none" /><path d="M15.500 5.500v3" /></I>
        <I w={14} h={14} className="ml-[9px]" sw={1.100}><path d="M1 12.500C1 6 6 1.500 13 1.500M4 13c0-5 4-8.500 9-8.500M7 13.500C7 10 9.500 7.500 13 7.500" /><circle cx="11.500" cy="12" r="1.500" fill="#fff" stroke="none" /></I>
        <I w={18} h={14} className="ml-[7px]" sw={1.100}><path d="M1 4.500h2.500L7 1v12L3.500 9.500H1zM9.500 5c1 1.200 1 2.800 0 4M12 3c2 2.500 2 5.500 0 8M14.500 1.500c2.500 3.500 2.500 7.500 0 11" /></I>
        <div className="ml-[5px] flex flex-col items-center text-[11.700px] leading-[18px]">
          <T className="w-[49px]">10:27 AM</T>
          <T className="w-[58px]">11/19/2020</T>
        </div>
        <I w={25} h={24} className="ml-[15px] translate-y-[2px]"><path d="M0 0h16v13h-9l-3.500 3V13H0z" fill="#fff" stroke="none" /><path d="M3 3.500h10M3 6.500h10M3 9.500h6" stroke="#111" /><circle cx="15.500" cy="15.500" r="7.800" fill="#333" stroke="#888" /><path d="M13.500 13.200l2.300-1.500v7.500" strokeWidth="1.400" /></I>
        <div className="ml-[12px] h-full w-px shrink-0 bg-[#5a5a5a]" />
      </div>
    </div>
  );
}

export default function App() {
  return (
    <div className="flex h-[768px] w-[1366px] flex-col overflow-hidden bg-black">
      <div className="flex h-[728px]">
        <Meeting />
        <Notes />
      </div>
      <Taskbar />
    </div>
  );
}
